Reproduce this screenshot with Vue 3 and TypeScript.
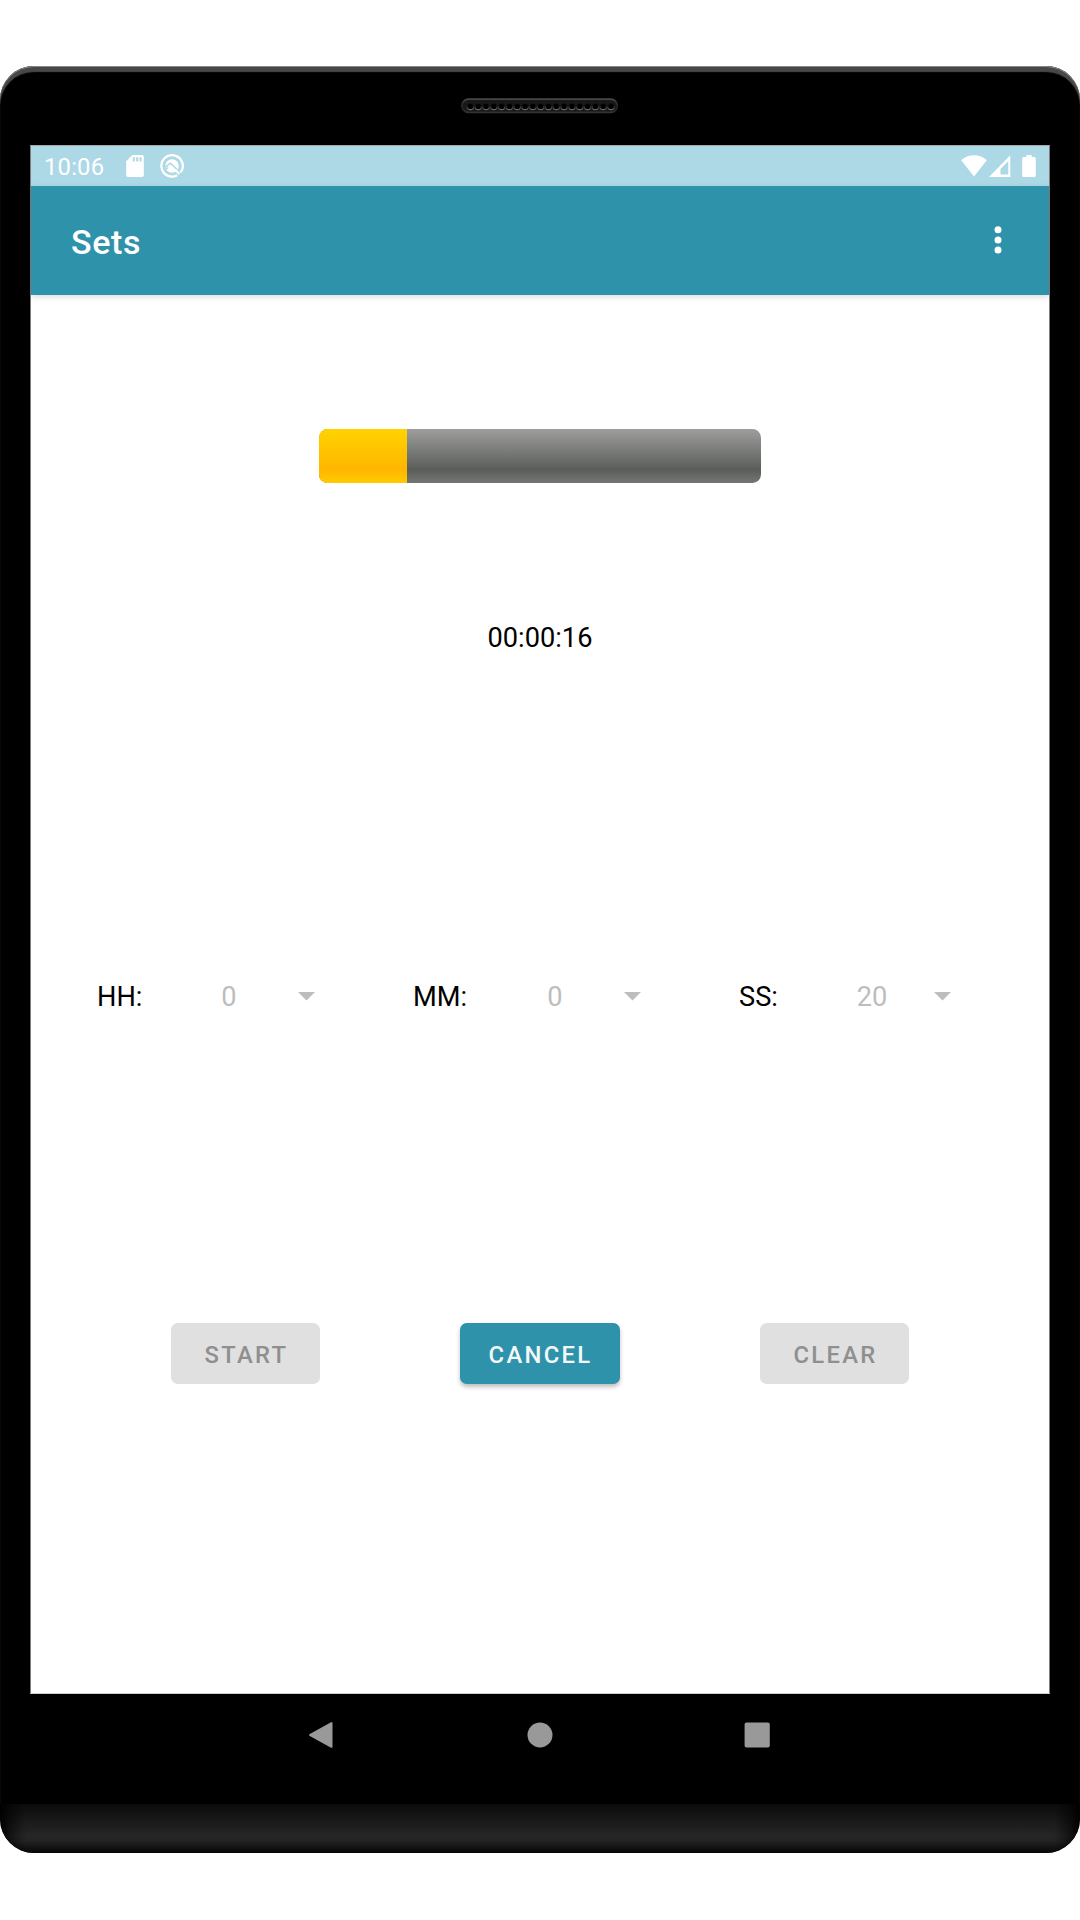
<script setup lang="ts">
interface Picker {
  label: string
  value: string
  key: string
}

const pickers: Picker[] = [
  { label: 'HH:', value: '0', key: 'hh' },
  { label: 'MM:', value: '0', key: 'mm' },
  { label: 'SS:', value: '20', key: 'ss' },
]

const total = 20
const remaining = 16
const progress = `${((total - remaining) / total) * 100}%`
const holes = Array.from({ length: 19 }, (_, i) => 9.4 + i * 7.81)
</script>

<template>
  <div class="page">
    <div class="device">
      <div class="bezel-top">
        <svg class="speaker" width="158" height="16" viewBox="0 0 158 16">
          <defs>
            <linearGradient id="speakerEdge" x1="0" y1="0" x2="0" y2="1">
              <stop offset="0" stop-color="#484848" />
              <stop offset="0.3" stop-color="#2b2b2b" />
              <stop offset="0.7" stop-color="#202020" />
              <stop offset="1" stop-color="#333" />
            </linearGradient>
            <linearGradient id="holeEdge" x1="0" y1="0" x2="0" y2="1">
              <stop offset="0.4" stop-color="#141414" />
              <stop offset="1" stop-color="#6c6c6c" />
            </linearGradient>
          </defs>
          <rect x="0.9" y="1.2" width="155.4" height="13.2" rx="6.6" fill="#191919" stroke="url(#speakerEdge)" stroke-width="1.8" />
          <circle v-for="x in holes" :key="x" :cx="x" cy="8.4" r="3.2" fill="#000" stroke="url(#holeEdge)" stroke-width="1.1" />
        </svg>
      </div>

      <div class="screen">
        <div class="status">
          <span class="clock">10:06</span>
          <svg class="sd" width="18" height="22" viewBox="0 0 18 22">
            <path fill="#fff" fill-rule="evenodd" d="M6.4 0H16a1.8 1.8 0 0 1 1.8 1.8v18.4A1.8 1.8 0 0 1 16 22H2a1.8 1.8 0 0 1-1.8-1.8V6.3zM6.8 2.2v4.3h2V2.2zM10.2 2.2v4.3h2V2.2zM13.5 2.2v4.3h2V2.2z" />
          </svg>
          <svg class="debug" width="24" height="24" viewBox="0 0 24 24">
            <path d="M20.6 18.4A10.7 10.7 0 1 0 17.2 21.3" fill="none" stroke="#fff" stroke-width="2.3" />
            <circle cx="12" cy="12" r="6.8" fill="#fff" />
            <path d="M5 13.2l5.6-4 8.4 8.3" fill="none" stroke="#add8e6" stroke-width="1.6" />
            <path d="M5.4 15.6l2.8-2.2" fill="none" stroke="#add8e6" stroke-width="1.4" />
            <path d="M15 15.4l4.4 4.6" fill="none" stroke="#fff" stroke-width="2.2" />
          </svg>
          <span class="grow"></span>
          <svg width="26" height="22" viewBox="0 0 26 22">
            <path fill="#fff" d="M13 21.5L0.2 5.3C3.8 2 8.2.3 13 .3s9.2 1.7 12.8 5z" />
          </svg>
          <svg class="signal" width="22" height="22" viewBox="0 0 22 22">
            <path fill="#fff" fill-rule="evenodd" d="M0 22L21.3.3V22zM11.5 19.6h7.8V6l-7.8 8z" />
          </svg>
          <svg class="battery" width="14" height="22" viewBox="0 0 14 22">
            <path fill="#fff" d="M4.3 0h5.4v2.1h2.6c.8 0 1.5.7 1.5 1.5v16.9c0 .8-.7 1.5-1.5 1.5H1.7c-.8 0-1.5-.7-1.5-1.5V3.6c0-.8.7-1.5 1.5-1.5h2.6z" />
          </svg>
        </div>

        <header class="appbar">
          <h1>Sets</h1>
          <svg width="8" height="28" viewBox="0 0 8 28" fill="#fff">
            <circle cx="4" cy="3.7" r="3.5" />
            <circle cx="4" cy="13.9" r="3.5" />
            <circle cx="4" cy="24.1" r="3.5" />
          </svg>
        </header>

        <main>
          <div class="track"><div class="fill" :style="{ width: progress }"></div></div>
          <div class="time">00:00:{{ remaining }}</div>
          <div class="pickers">
            <div v-for="p in pickers" :key="p.key" class="picker" :class="p.key">
              <span class="label">{{ p.label }}</span>
              <span class="value">{{ p.value }}</span>
              <svg width="17" height="9" viewBox="0 0 17 9"><path d="M0 0h17L8.5 8.5z" fill="#bdbdbd" /></svg>
            </div>
          </div>
          <div class="buttons">
            <button disabled>START</button>
            <button class="primary">CANCEL</button>
            <button disabled>CLEAR</button>
          </div>
        </main>
      </div>

      <nav>
        <svg width="25" height="28" viewBox="0 0 25 28"><path d="M.8 13.1L21.6 1.4q1.9-.9 1.9.8v23.6q0 1.7-1.9.8L.8 14.9q-1.6-.9 0-1.8z" fill="#999" /></svg>
        <svg width="26" height="26" viewBox="0 0 26 26"><circle cx="13" cy="13" r="12.5" fill="#999" /></svg>
        <svg width="26" height="26" viewBox="0 0 26 26"><rect x=".6" y=".4" width="25.2" height="25.2" rx="2" fill="#999" /></svg>
      </nav>
      <div class="chin"></div>
    </div>
  </div>
</template>

<style>
body {
  margin: 0;
  background: #fff;
}
</style>

<style scoped>
.page {
  box-sizing: border-box;
  width: 1080px;
  height: 1920px;
  padding-top: 66px;
  overflow: hidden;
  background: #fff;
  font-family: Roboto, "Liberation Sans", sans-serif;
}
.device {
  display: flex;
  flex-direction: column;
  height: 1787px;
  border-radius: 34px;
  overflow: hidden;
  background: #000;
  box-shadow: inset 0 1px 0 #888, inset 0 6px 1px #484848;
}
.bezel-top {
  height: 79px;
  flex: none;
  display: flex;
  justify-content: center;
  align-items: flex-start;
}
.speaker {
  margin: 32px 0 0;
}
.screen {
  box-sizing: border-box;
  height: 1549px;
  flex: none;
  margin: 0 30px;
  display: flex;
  flex-direction: column;
  background: #fff;
  border: 1px solid rgba(0, 0, 0, 0.5);
  border-top-color: rgba(0, 0, 0, 0.35);
  border-bottom-color: rgba(0, 0, 0, 0.2);
}
.status {
  height: 40px;
  flex: none;
  display: flex;
  align-items: center;
  background: #add8e6;
  padding: 0 13px;
  color: #fff;
}
.clock {
  font-size: 23.8px;
  line-height: 28px;
  letter-spacing: 0.2px;
  padding-top: 2px;
  width: 82px;
}
.sd {
  margin-right: 16px;
}
.debug {
  margin-top: -1px;
}
.grow {
  flex: 1;
}
.signal {
  margin: 0 11px 0 2px;
}
.appbar {
  height: 109px;
  flex: none;
  display: flex;
  align-items: center;
  justify-content: space-between;
  box-sizing: border-box;
  padding: 0 47px 0 40px;
  background: #2e92aa;
  box-shadow: 0 2px 6px rgba(0, 0, 0, 0.14);
}
.appbar svg {
  margin-bottom: 1px;
}
h1 {
  margin: 2px 0 0;
  font-size: 34px;
  font-weight: 500;
  line-height: 40px;
  letter-spacing: 0.6px;
  color: #fff;
}
main {
  flex: 1;
  display: flex;
  flex-direction: column;
  align-items: center;
}
.track {
  width: 442px;
  height: 54px;
  margin-top: 134px;
  border-radius: 8.5px;
  overflow: hidden;
  background: linear-gradient(#9d9d9d, #80827f 33%, #5a5d5a 75%, #747674);
}
.fill {
  height: 100%;
  background: linear-gradient(#ffd300, #ffb600 75%, #ffcb00);
}
.time {
  margin-top: 139px;
  font-size: 27.2px;
  line-height: 32px;
  color: #000;
}
.pickers {
  width: 100%;
  margin-top: 325px;
  display: flex;
}
.picker {
  display: flex;
  align-items: center;
  font-size: 27.2px;
  line-height: 32px;
}
.label {
  padding-top: 2px;
  color: #000;
}
.value {
  padding-top: 2px;
  color: #bdbdbd;
  text-align: center;
  width: 32px;
}
.hh .label {
  width: 116px;
}
.mm .label {
  width: 126px;
}
.ss .label {
  width: 117px;
}
.hh {
  margin-left: 66px;
}
.mm {
  margin-left: 98px;
}
.ss {
  margin-left: 98px;
}
.hh .value,
.mm .value {
  margin-right: 53px;
}
.ss .value {
  margin-right: 46px;
}
.buttons {
  margin-top: 310px;
  display: flex;
  gap: 140px;
}
button {
  width: 149px;
  height: 61px;
  padding: 2px 0 0 2px;
  border: 0;
  border-radius: 6.8px;
  background: #e0e0e0;
  color: #8f8f8f;
  font: 500 23.8px/28px Roboto, "Liberation Sans", sans-serif;
  letter-spacing: 2.3px;
}
button.primary {
  width: 160px;
  padding-left: 1px;
  background: #2e92aa;
  color: #f4f8f9;
  box-shadow: 0 3px 4px rgba(0, 0, 0, 0.25);
}
nav {
  height: 110px;
  flex: none;
  display: flex;
  align-items: flex-start;
  justify-content: space-between;
  box-sizing: border-box;
  padding: 27.5px 310px 0 309px;
}
nav svg:first-child {
  margin: -1px 1px 0 0;
}
.chin {
  height: 49px;
  border-radius: 0 0 34px 34px;
  background:
    linear-gradient(90deg, #000, rgba(0, 0, 0, 0.5) 10px, transparent 26px, transparent calc(100% - 26px), rgba(0, 0, 0, 0.5) calc(100% - 10px), #000),
    linear-gradient(#0b0b0b, #262626 65%, #232323 76%, #050505);
}
</style>
